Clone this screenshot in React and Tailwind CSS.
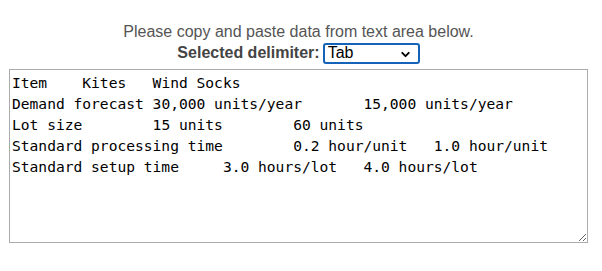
import React from 'react'
import { ChevronDown } from 'lucide-react'

const rows = [
  'Item\tKites\tWind Socks',
  'Demand forecast\t30,000 units/year\t15,000 units/year',
  'Lot size\t15 units\t60 units',
  'Standard processing time\t0.2 hour/unit\t1.0 hour/unit',
  'Standard setup time\t3.0 hours/lot\t4.0 hours/lot',
]

export default function App() {
  return (
    <div className="w-[602px] h-[271px] bg-white pl-[9px] pr-[14px] pt-[22px] font-['Liberation_Sans',Arial,sans-serif]">
      <div className="text-center text-[16px] leading-[19px] text-[#555555]">
        Please copy and paste data from text area below.
      </div>
      <div className="flex items-center justify-center gap-[3px] h-[22px] mt-[1px]">
        <span className="font-bold text-[16px] text-[#444444]">Selected delimiter:</span>
        <div className="relative flex items-center w-[97px] h-[21px] border-2 border-[#1463b8] rounded-[3px] bg-white overflow-hidden">
          <select
            defaultValue="tab"
            className="appearance-none w-full py-0 pl-[3px] bg-transparent text-[16px] leading-[16px] text-black outline-none font-['Liberation_Sans',Arial,sans-serif]"
          >
            <option value="tab">Tab</option>
            <option value="comma">Comma</option>
            <option value="semicolon">Semicolon</option>
            <option value="space">Space</option>
          </select>
          <ChevronDown size={13} strokeWidth={3.5} className="absolute right-[6px] top-[3px] text-black pointer-events-none" />
        </div>
      </div>
      <textarea
        defaultValue={rows.join('\n')}
        spellCheck={false}
        className="block mt-[5px] w-[579px] h-[174px] border border-[#ababab] p-[2px] text-[14.6px] leading-[21px] text-black whitespace-pre [tab-size:8] outline-none resize font-['DejaVu_Sans_Mono',monospace]"
      />
    </div>
  )
}
